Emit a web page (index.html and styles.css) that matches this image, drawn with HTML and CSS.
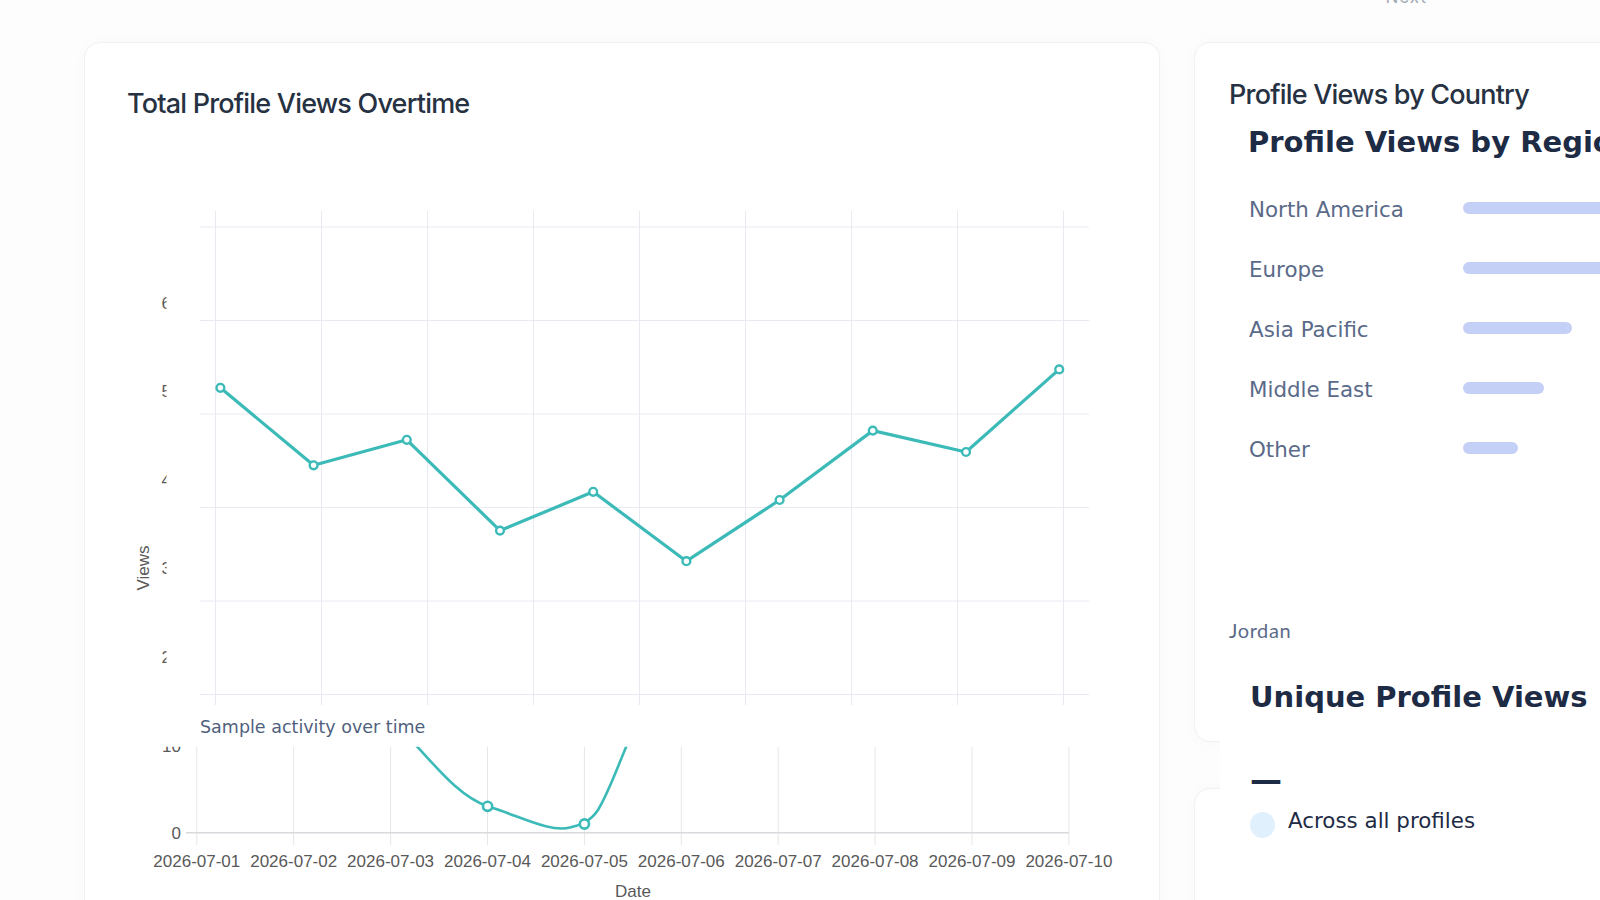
FILE: index.html
```html
<!DOCTYPE html>
<html lang="en">
<head>
<meta charset="utf-8">
<title>Profile Views</title>
<link rel="stylesheet" href="styles.css">
</head>
<body>
<div class="topbar"><span class="topbar-text">Next</span></div>
<main class="layout">
  <section class="card card-main">
    <h2 class="card-title">Total Profile Views Overtime</h2>
    <svg class="chart" width="1074" height="780" viewBox="85 120 1074 780" xmlns="http://www.w3.org/2000/svg">
      <defs>
        <clipPath id="ytick-clip"><rect x="150" y="200" width="16.5" height="520"/></clipPath>
        <clipPath id="lower-clip"><rect x="85" y="746.7" width="1074" height="160"/></clipPath>
      </defs>
      <g class="grid">
        <line x1="200" y1="227" x2="1089" y2="227"/>
        <line x1="200" y1="320.5" x2="1089" y2="320.5"/>
        <line x1="200" y1="414" x2="1089" y2="414"/>
        <line x1="200" y1="507.5" x2="1089" y2="507.5"/>
        <line x1="200" y1="601" x2="1089" y2="601"/>
        <line x1="200" y1="694.5" x2="1089" y2="694.5"/>
        <line x1="215.5" y1="211" x2="215.5" y2="705"/>
        <line x1="321.5" y1="211" x2="321.5" y2="705"/>
        <line x1="427.5" y1="211" x2="427.5" y2="705"/>
        <line x1="533.5" y1="211" x2="533.5" y2="705"/>
        <line x1="639.5" y1="211" x2="639.5" y2="705"/>
        <line x1="745.5" y1="211" x2="745.5" y2="705"/>
        <line x1="851.5" y1="211" x2="851.5" y2="705"/>
        <line x1="957.5" y1="211" x2="957.5" y2="705"/>
        <line x1="1063.5" y1="211" x2="1063.5" y2="705"/>
      </g>
      <g class="tick" clip-path="url(#ytick-clip)">
        <text x="161.5" y="309">6</text>
        <text x="161.5" y="397">5</text>
        <text x="161.5" y="486">4</text>
        <text x="161.5" y="574">3</text>
        <text x="161.5" y="663">2</text>
      </g>
      <text class="axis-title" transform="translate(148.7 568) rotate(-90)" text-anchor="middle">Views</text>
      <polyline class="series" points="220.4,387.8 313.6,465.3 406.8,439.8 500,530.6 593.2,491.8 686.4,561.2 779.6,500 872.8,430.6 966,452 1059.2,369.4"/>
      <g class="marker">
        <circle cx="220.4" cy="387.8" r="3.9"/>
        <circle cx="313.6" cy="465.3" r="3.9"/>
        <circle cx="406.8" cy="439.8" r="3.9"/>
        <circle cx="500" cy="530.6" r="3.9"/>
        <circle cx="593.2" cy="491.8" r="3.9"/>
        <circle cx="686.4" cy="561.2" r="3.9"/>
        <circle cx="779.6" cy="500" r="3.9"/>
        <circle cx="872.8" cy="430.6" r="3.9"/>
        <circle cx="966" cy="452" r="3.9"/>
        <circle cx="1059.2" cy="369.4" r="3.9"/>
      </g>
      <text class="subtitle" x="200" y="732.7">Sample activity over time</text>
      <g clip-path="url(#lower-clip)">
        <g class="grid-lower">
          <line x1="196.8" y1="740" x2="196.8" y2="845"/>
          <line x1="293.7" y1="740" x2="293.7" y2="845"/>
          <line x1="390.6" y1="740" x2="390.6" y2="845"/>
          <line x1="487.5" y1="740" x2="487.5" y2="845"/>
          <line x1="584.4" y1="740" x2="584.4" y2="845"/>
          <line x1="681.3" y1="740" x2="681.3" y2="845"/>
          <line x1="778.2" y1="740" x2="778.2" y2="845"/>
          <line x1="875.1" y1="740" x2="875.1" y2="845"/>
          <line x1="972" y1="740" x2="972" y2="845"/>
          <line x1="1068.9" y1="740" x2="1068.9" y2="845"/>
        </g>
        <line class="zero-line" x1="186" y1="832.7" x2="1069" y2="832.7"/>
        <path class="series-curve" d="M 404 733 C 430 758, 455 795, 487.6 806.3 C 519.9 816, 550 833, 570 827.5 C 580 825, 590 822, 598 810 C 610 790, 618 765, 632 733"/>
        <g class="marker-lower">
          <circle cx="487.6" cy="806.3" r="4.6"/>
          <circle cx="584.4" cy="824" r="4.6"/>
        </g>
        <text class="tick" x="181" y="752" text-anchor="end">10</text>
      </g>
      <text class="tick" x="181" y="838.7" text-anchor="end">0</text>
      <g class="tick" text-anchor="middle">
        <text x="196.8" y="867">2026-07-01</text>
        <text x="293.7" y="867">2026-07-02</text>
        <text x="390.6" y="867">2026-07-03</text>
        <text x="487.5" y="867">2026-07-04</text>
        <text x="584.4" y="867">2026-07-05</text>
        <text x="681.3" y="867">2026-07-06</text>
        <text x="778.2" y="867">2026-07-07</text>
        <text x="875.1" y="867">2026-07-08</text>
        <text x="972" y="867">2026-07-09</text>
        <text x="1068.9" y="867">2026-07-10</text>
      </g>
      <text class="axis-title" x="633" y="897" text-anchor="middle">Date</text>
    </svg>
  </section>

  <aside class="side">
    <section class="card card-country">
      <h2 class="card-title country-title">Profile Views by Country</h2>
      <div class="region-block">
        <h3 class="region-heading">Profile Views by Region</h3>
        <ul class="region-list">
          <li class="region-row"><span class="region-name">North America</span><span class="region-bar" style="width:218px"></span></li>
          <li class="region-row"><span class="region-name">Europe</span><span class="region-bar" style="width:163px"></span></li>
          <li class="region-row"><span class="region-name">Asia Pacific</span><span class="region-bar" style="width:109px"></span></li>
          <li class="region-row"><span class="region-name">Middle East</span><span class="region-bar" style="width:81px"></span></li>
          <li class="region-row"><span class="region-name">Other</span><span class="region-bar" style="width:55px"></span></li>
        </ul>
      </div>
      <p class="owner">Jordan</p>
      <div class="unique">
        <h3 class="unique-heading">Unique Profile Views</h3>
        <div class="unique-value">—</div>
        <div class="unique-note"><span class="dot"></span><span class="note-text">Across all profiles</span></div>
      </div>
    </section>
    <section class="card card-next"></section>
  </aside>
</main>
</body>
</html>
```

FILE: styles.css
```css
html, body {
  margin: 0;
  padding: 0;
}

body {
  width: 1600px;
  height: 900px;
  overflow: hidden;
  background: #fdfdfe;
  font-family: "DejaVu Sans", "Noto Sans", sans-serif;
  color: #1e2b45;
}

.topbar {
  height: 6px;
  overflow: hidden;
  display: flex;
  justify-content: flex-end;
  align-items: flex-end;
  padding-right: 173px;
}

.topbar-text {
  display: block;
  font-family: Inter, "Liberation Sans", sans-serif;
  font-size: 17px;
  line-height: 18px;
  letter-spacing: 1px;
  color: #a3a9b3;
}

.layout {
  display: flex;
  align-items: flex-start;
  gap: 34px;
  padding: 36px 0 0 84px;
}

.card {
  box-sizing: border-box;
  background: #ffffff;
  border: 1px solid #eff1f4;
  border-radius: 16px;
  box-shadow: 0 0 14px rgba(15, 23, 42, 0.025);
}

.card-main {
  flex: none;
  width: 1076px;
  height: 900px;
  padding-top: 45px;
}

.card-title {
  margin: 0 0 0 42px;
  font-family: Inter, "Liberation Sans", sans-serif;
  font-weight: 500;
  font-size: 27px;
  line-height: 32px;
  letter-spacing: -0.8px;
  color: #263142;
  white-space: nowrap;
}

.chart {
  display: block;
}

.grid line {
  stroke: #e7eaf0;
  stroke-width: 1;
}

.grid-lower line {
  stroke: #e6e6e8;
  stroke-width: 1;
}

.zero-line {
  stroke: #d8d9dc;
  stroke-width: 1.5;
}

.tick text,
text.tick {
  font-family: "Liberation Sans", Arial, sans-serif;
  font-size: 17px;
  fill: #595959;
}

.axis-title {
  font-family: "Liberation Sans", Arial, sans-serif;
  font-size: 17px;
  fill: #595959;
}

.series {
  fill: none;
  stroke: #3bbab8;
  stroke-width: 3.2;
  stroke-linejoin: round;
}

.marker circle {
  fill: #ffffff;
  stroke: #3bbab8;
  stroke-width: 2.4;
}

.series-curve {
  fill: none;
  stroke: #3bbab8;
  stroke-width: 2.6;
}

.marker-lower circle {
  fill: #ffffff;
  stroke: #3bbab8;
  stroke-width: 2.6;
}

.subtitle {
  font-family: "DejaVu Sans", sans-serif;
  font-size: 17.5px;
  fill: #4f5f7e;
}

.side {
  flex: none;
  width: 450px;
  display: flex;
  flex-direction: column;
  gap: 46px;
}

.card-country {
  height: 700px;
  padding: 36px 0 0 34px;
}

.country-title {
  margin: 0;
}

.region-block {
  margin-top: 12.5px;
  padding-left: 19px;
}

.region-heading {
  margin: 0;
  font-family: "DejaVu Sans", sans-serif;
  font-weight: bold;
  font-size: 29px;
  line-height: 36px;
  color: #1e2b45;
  white-space: nowrap;
}

.region-list {
  list-style: none;
  margin: 20px 0 0;
  padding: 0;
}

.region-row {
  display: flex;
  align-items: center;
  height: 60px;
}

.region-name {
  flex: none;
  width: 214px;
  padding-left: 1px;
  font-size: 21.4px;
  line-height: 24px;
  color: #5a6a89;
}

.region-bar {
  flex: none;
  height: 12px;
  margin-bottom: 3px;
  border-radius: 6px;
  background: #c4d0f6;
}

.owner {
  margin: 138px 0 0;
  font-family: Lato, "Open Sans", sans-serif;
  font-size: 20px;
  line-height: 24px;
  letter-spacing: 0.6px;
  color: #5b6b88;
}

.unique {
  position: relative;
  z-index: 1;
  height: 262px;
  margin-left: -9px;
  padding: 37px 0 0 30px;
  background: #ffffff;
}

.unique-heading {
  margin: 0;
  font-family: "DejaVu Sans", sans-serif;
  font-weight: bold;
  font-size: 29px;
  line-height: 36px;
  color: #1e2b45;
  white-space: nowrap;
}

.unique-value {
  margin-top: 47px;
  font-family: "DejaVu Sans", sans-serif;
  font-weight: bold;
  font-size: 32px;
  line-height: 36px;
  color: #1e2b45;
}

.unique-note {
  display: flex;
  align-items: flex-start;
  gap: 13px;
  margin-top: 11px;
}

.dot {
  flex: none;
  width: 25px;
  height: 26px;
  margin-top: 3px;
  border-radius: 50%;
  background: #e1f0fd;
}

.note-text {
  font-size: 21.4px;
  line-height: 24px;
  color: #1e2b45;
}

.card-next {
  height: 300px;
}
```
